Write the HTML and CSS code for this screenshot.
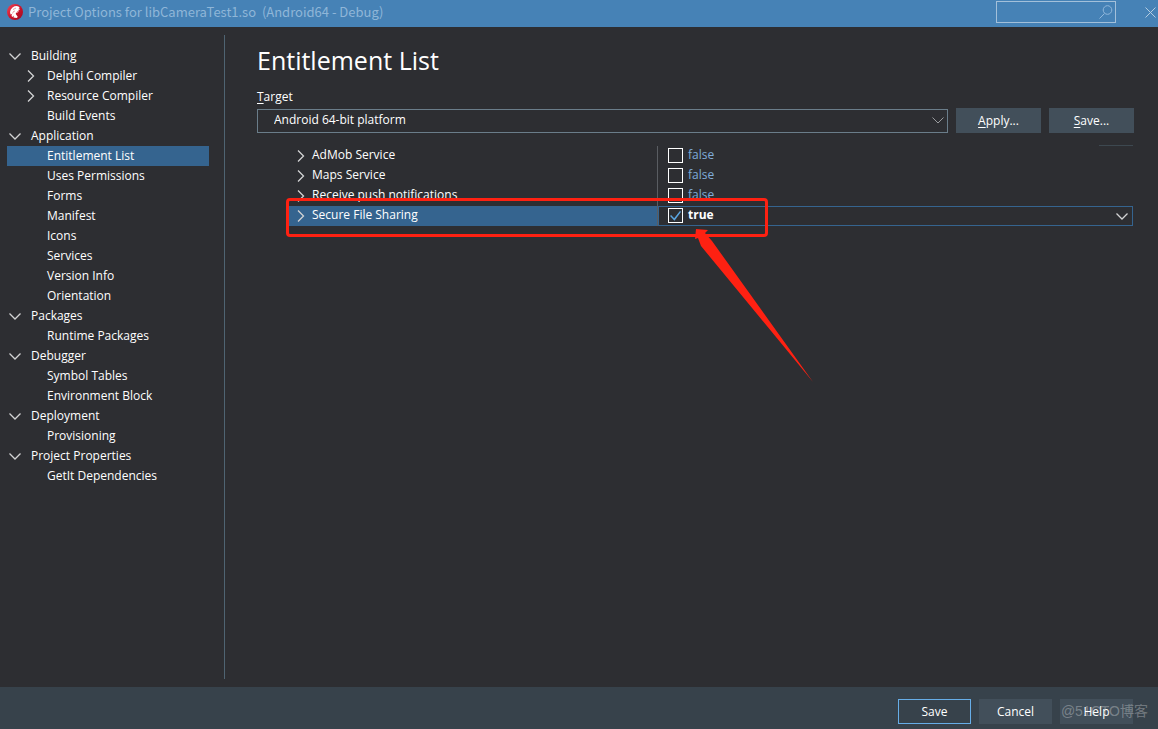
FILE: index.html
```html
<!DOCTYPE html>
<html lang="en">
<head>
<meta charset="utf-8">
<title>Project Options for libCameraTest1.so (Android64 - Debug)</title>
<link rel="stylesheet" href="styles.css">
</head>
<body>
<svg class="defs" aria-hidden="true">
  <symbol id="down" viewBox="0 0 12 12"><path d="M.5 3.500 6 9l5.500-5.500"/></symbol>
  <symbol id="right" viewBox="0 0 12 12"><path d="M3 .5 8.500 6 3 11.500"/></symbol>
</svg>
<header class="titlebar">
  <svg class="logo" viewBox="0 0 16 16" aria-hidden="true">
    <defs><linearGradient id="ball" x1="0" y1="0" x2="1" y2="1"><stop offset="0" stop-color="#f0485a"/><stop offset=".5" stop-color="#d0142c"/><stop offset="1" stop-color="#9c0c20"/></linearGradient></defs>
    <circle cx="8" cy="8" r="8" fill="url(#ball)"/>
    <path fill="#fff" d="M3 8 3.800 5.500 5.500 3.500 7.500 2.300 9.500 2 11.500 2.600 13 4.200 11.500 4.200 13 6 11.200 5.800 12 7.500 10.300 7.300 10.500 9 9 8.500 8.800 10 10.800 13 9.500 14 6.500 13.500 6.800 11.500 5.500 13 4.500 12 5 10 3.500 10.500z"/>
    <path fill="none" stroke="#e0606f" stroke-width=".6" d="M5.500 9.500 6.500 7.500 8 7M6 5.500 9 4"/>
  </svg>
  <h1 class="window-title">Project Options for libCameraTest1.so&nbsp; (Android64 - Debug)</h1>
  <div class="search">
    <input class="search-input" type="search" aria-label="Search options">
    <svg class="search-icon" viewBox="0 0 14 14" aria-hidden="true"><circle cx="8.500" cy="5" r="4.300"/><path d="M5.500 8.500.5 13.500"/></svg>
  </div>
  <button class="close" type="button" aria-label="Close"><svg viewBox="0 0 11 11"><path d="M.5.5l10 10M10.500.5l-10 10"/></svg></button>
</header>

<div class="body">
  <nav class="sidebar" aria-label="Options">
    <ul class="tree">
      <li><div class="node"><button class="toggle" type="button" aria-label="Collapse Building"><svg><use href="#down"/></svg></button><a href="#b">Building</a></div>
        <ul>
          <li><div class="node child"><button class="toggle" type="button" aria-label="Expand Delphi Compiler"><svg><use href="#right"/></svg></button><a href="#b">Delphi Compiler</a></div></li>
          <li><div class="node child"><button class="toggle" type="button" aria-label="Expand Resource Compiler"><svg><use href="#right"/></svg></button><a href="#b">Resource Compiler</a></div></li>
          <li><div class="node leaf"><a href="#b">Build Events</a></div></li>
        </ul></li>
      <li><div class="node"><button class="toggle" type="button" aria-label="Collapse Application"><svg><use href="#down"/></svg></button><a href="#a">Application</a></div>
        <ul>
          <li><div class="node leaf selected"><a href="#a" aria-current="page">Entitlement List</a></div></li>
          <li><div class="node leaf"><a href="#a">Uses Permissions</a></div></li>
          <li><div class="node leaf"><a href="#a">Forms</a></div></li>
          <li><div class="node leaf"><a href="#a">Manifest</a></div></li>
          <li><div class="node leaf"><a href="#a">Icons</a></div></li>
          <li><div class="node leaf"><a href="#a">Services</a></div></li>
          <li><div class="node leaf"><a href="#a">Version Info</a></div></li>
          <li><div class="node leaf"><a href="#a">Orientation</a></div></li>
        </ul></li>
      <li><div class="node"><button class="toggle" type="button" aria-label="Collapse Packages"><svg><use href="#down"/></svg></button><a href="#p">Packages</a></div>
        <ul><li><div class="node leaf"><a href="#p">Runtime Packages</a></div></li></ul></li>
      <li><div class="node"><button class="toggle" type="button" aria-label="Collapse Debugger"><svg><use href="#down"/></svg></button><a href="#d">Debugger</a></div>
        <ul>
          <li><div class="node leaf"><a href="#d">Symbol Tables</a></div></li>
          <li><div class="node leaf"><a href="#d">Environment Block</a></div></li>
        </ul></li>
      <li><div class="node"><button class="toggle" type="button" aria-label="Collapse Deployment"><svg><use href="#down"/></svg></button><a href="#e">Deployment</a></div>
        <ul><li><div class="node leaf"><a href="#e">Provisioning</a></div></li></ul></li>
      <li><div class="node"><button class="toggle" type="button" aria-label="Collapse Project Properties"><svg><use href="#down"/></svg></button><a href="#r">Project Properties</a></div>
        <ul><li><div class="node leaf"><a href="#r">GetIt Dependencies</a></div></li></ul></li>
    </ul>
  </nav>

  <main class="content">
    <h2 class="page-title">Entitlement List</h2>
    <label class="target-label" for="target"><u>T</u>arget</label>
    <div class="target-row">
      <div class="combo">
        <select class="combo-select" id="target"><option>Android 64-bit platform</option></select>
        <svg class="combo-arrow" aria-hidden="true"><use href="#down"/></svg>
      </div>
      <button class="btn wide" type="button"><span><u>A</u>pply...</span></button>
      <button class="btn wide" type="button"><span><u>S</u>ave...</span></button>
    </div>
    <div class="rule"></div>
    <div class="grid-wrap">
      <table class="props">
        <colgroup><col class="name-col"><col></colgroup>
        <tbody>
        <tr><th scope="row"><div class="prop"><button class="toggle" type="button" aria-label="Expand AdMob Service"><svg><use href="#right"/></svg></button><span>AdMob Service</span></div></th>
          <td><label class="value"><input type="checkbox"><span>false</span></label></td></tr>
        <tr><th scope="row"><div class="prop"><button class="toggle" type="button" aria-label="Expand Maps Service"><svg><use href="#right"/></svg></button><span>Maps Service</span></div></th>
          <td><label class="value"><input type="checkbox"><span>false</span></label></td></tr>
        <tr><th scope="row"><div class="prop"><button class="toggle" type="button" aria-label="Expand Receive push notifications"><svg><use href="#right"/></svg></button><span>Receive push notifications</span></div></th>
          <td><label class="value"><input type="checkbox"><span>false</span></label></td></tr>
        <tr class="active"><th scope="row"><div class="prop"><button class="toggle" type="button" aria-label="Expand Secure File Sharing"><svg><use href="#right"/></svg></button><span>Secure File Sharing</span></div></th>
          <td><div class="editor"><label class="value"><input type="checkbox" checked><span>true</span></label><button class="toggle" type="button" aria-label="Show values"><svg><use href="#down"/></svg></button></div></td></tr>
        </tbody>
      </table>
      <div class="callout"></div>
      <svg class="arrow" viewBox="0 0 120 154" aria-hidden="true"><path d="M1 0 13 1 10 4 17 12 118 153 6 17 3 9 0 10z"/></svg>
    </div>
  </main>
</div>

<footer class="footer">
  <button class="btn default" type="submit">Save</button>
  <button class="btn" type="button">Cancel</button>
  <button class="btn" type="button">Help</button>
  <span class="watermark">@51CTO博客</span>
</footer>
</body>
</html>
```
FILE: styles.css
```css
* { box-sizing: border-box; }

body {
  margin: 0;
  min-height: 100vh;
  display: flex;
  flex-direction: column;
  background: #2d2e32;
  color: #fff;
  font: 12px/20px "Open Sans", "Noto Sans", sans-serif;
}

button, input, select { font: inherit; color: inherit; }
ul { list-style: none; margin: 0; padding: 0; }
a { color: inherit; text-decoration: none; }
u { text-underline-offset: 2px; }
svg { fill: none; display: block; }
.defs { position: absolute; width: 0; height: 0; }

.titlebar {
  display: flex;
  align-items: center;
  height: 27px;
  padding: 0 2px 3px 7px;
  background: #4682b6;
  color: #8fb6d8;
}
.logo { width: 16px; height: 16px; margin-right: 5px; }
.window-title {
  flex: 1;
  margin: 0;
  font: 13px/20px "Noto Sans CJK SC", "Noto Sans", sans-serif;
}
.search { position: relative; width: 120px; height: 22px; }
.search-input {
  display: block;
  width: 100%;
  height: 100%;
  padding: 0 20px 0 4px;
  border: 1px solid #a3c0da;
  background: transparent;
  appearance: none;
}
.search-icon {
  position: absolute;
  right: 3px;
  top: 4px;
  width: 14px;
  height: 14px;
  stroke: #91b8dc;
}
.close {
  width: 11px;
  height: 11px;
  margin-left: 29px;
  padding: 0;
  border: 0;
  background: none;
}
.close svg { width: 11px; height: 11px; stroke: #b5cde2; }

.body { flex: 1; display: flex; padding: 8px 0; }

.sidebar {
  width: 225px;
  flex: none;
  padding: 11px 15px 0 7px;
  border-right: 1px solid #4f6472;
}
.node { display: flex; align-items: center; height: 20px; padding-left: 2px; }
.child { padding-left: 18px; }
.leaf { padding-left: 40px; }
.selected { background: #35648f; }
.toggle {
  flex: none;
  width: 22px;
  height: 20px;
  padding: 0;
  border: 0;
  background: none;
}
.toggle svg { width: 12px; height: 12px; stroke: #d2d3d4; stroke-width: 1.3; }
.combo-arrow { stroke: #9a9c9f; }

.content { flex: 1; min-width: 0; padding: 7px 24px 0 32px; }
.page-title { margin: 0; font-size: 25px; line-height: 36px; font-weight: 400; }
.target-label { display: block; margin-top: 9px; }
.target-row { display: flex; align-items: center; gap: 8px; margin-top: 1px; }
.combo { position: relative; flex: 1; }
.combo-select {
  display: block;
  width: 100%;
  height: 24px;
  padding: 0 28px 2px 16px;
  border: 1px solid #6a7d8a;
  border-radius: 0;
  background: transparent;
  appearance: none;
}
.combo-arrow { position: absolute; right: 4px; top: 5px; width: 12px; height: 12px; }

.btn {
  width: 73px;
  height: 25px;
  padding: 0;
  border: 1px solid #424f5a;
  background: #424f5a;
}
.wide { width: 85px; }
.default { border-color: #67aee8; background: #37424b; }

.rule { width: 34px; height: 1px; margin: 12px 1px 0 auto; background: #3d4850; }

.grid-wrap { position: relative; padding: 0 1px 0 32px; }
.props { width: 100%; table-layout: fixed; border-collapse: collapse; }
.name-col { width: 369px; }
.props th, .props td { height: 20px; padding: 0; font-weight: 400; text-align: left; }
.props th { background: linear-gradient(#5a5d62, #5a5d62) 368px 0 / 1px 100% no-repeat; }
.prop { display: flex; align-items: flex-start; height: 20px; padding-left: 1px; }
.prop span, .value span { line-height: 18px; }
.prop .toggle svg { margin-left: 5px; }
.value { display: flex; align-items: flex-start; gap: 5px; height: 20px; padding-left: 10px; color: #7fabd8; }
.value input {
  width: 15px;
  height: 15px;
  margin: 2px 0 0;
  border: 1px solid #fff;
  appearance: none;
}
.value input:checked::before {
  content: "";
  display: block;
  width: 13px;
  height: 13px;
  background: #5aa5e0;
  clip-path: polygon(8% 54%, 16% 46%, 40% 72%, 84% 15%, 93% 21%, 42% 90%);
}
.active { background: linear-gradient(to right, #35648f 369px, transparent 369px); }
.editor {
  display: flex;
  align-items: center;
  justify-content: space-between;
  height: 20px;
  border: 1px solid #35648f;
}
.editor .value { height: 18px; padding-left: 9px; color: #fff; font-weight: 700; }
.editor .value input { margin-top: 1px; }
.editor .value span { line-height: 16px; }
.editor .toggle { width: 16px; height: 18px; }

.callout {
  position: absolute;
  left: 29px;
  top: 52px;
  width: 482px;
  height: 39px;
  border: 3px solid #fe2112;
  border-radius: 4px;
}
.arrow { position: absolute; left: 438px; top: 83px; width: 120px; height: 154px; fill: #fe2112; }

.footer {
  position: relative;
  display: flex;
  justify-content: flex-end;
  gap: 8px;
  padding: 12px 25px 5px;
  background: #37424b;
}
.watermark {
  position: absolute;
  right: 10px;
  top: 14px;
  color: #ffffff4d;
  font: 14px/20px "Liberation Sans", "Noto Sans CJK SC", sans-serif;
  pointer-events: none;
}
```
